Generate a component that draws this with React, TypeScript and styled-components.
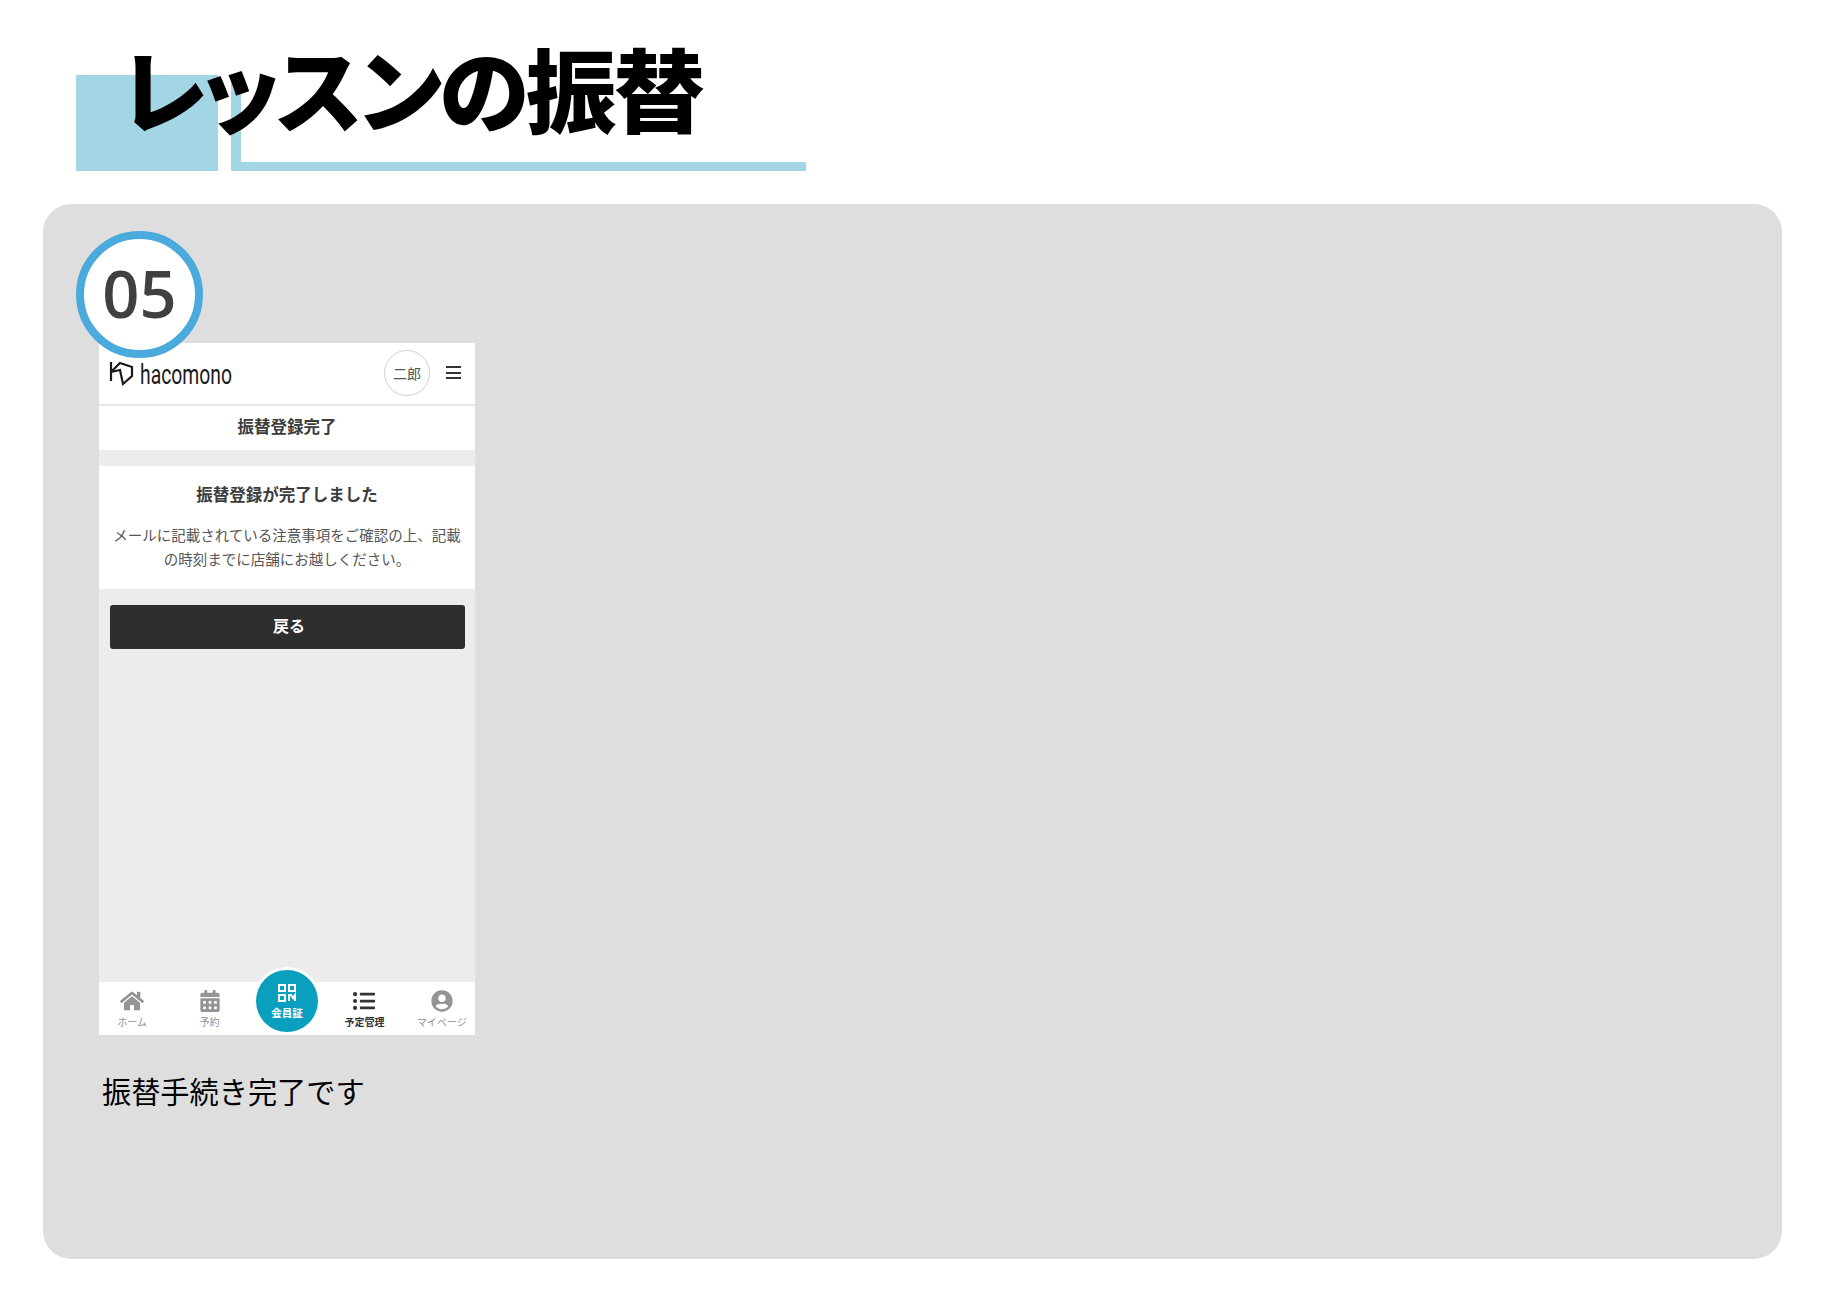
import * as React from 'react';
import { FaCalendarAlt, FaHome, FaListUl, FaUserCircle } from 'react-icons/fa';
import styled, { createGlobalStyle } from 'styled-components';

const GlobalStyle = createGlobalStyle`
  html, body {
    margin: 0;
    padding: 0;
    background: #fff;
    font-family: "Noto Sans CJK JP", "Noto Sans", sans-serif;
  }
`;

const Page = styled.div`
  width: 1825px;
  height: 1298px;
  padding: 0 43px;
  box-sizing: border-box;
  overflow: hidden;
`;

const Head = styled.header`
  position: relative;
  height: 204px;
`;

const HeadSquare = styled.div`
  position: absolute;
  left: 33px;
  top: 75px;
  width: 142px;
  height: 96px;
  background: #a2d6e5;
`;

const HeadFrame = styled.div`
  position: absolute;
  left: 188px;
  top: 75px;
  width: 565px;
  height: 87px;
  border-left: 10px solid #a2d6e5;
  border-bottom: 9px solid #a2d6e5;
`;

const Title = styled.h1`
  position: relative;
  margin: 0;
  padding: 31px 0 0 78px;
  font-size: 91px;
  line-height: 110px;
  font-weight: 900;
  letter-spacing: -3px;
  font-feature-settings: "palt" 1;
  color: #000;
`;

const Panel = styled.main`
  position: relative;
  height: 1055px;
  box-sizing: border-box;
  padding: 139px 0 0 56px;
  background: #dedede;
  border-radius: 28px;
`;

const StepBadge = styled.div`
  position: absolute;
  left: 33px;
  top: 27px;
  z-index: 2;
  width: 127px;
  height: 127px;
  box-sizing: border-box;
  border: 8px solid #4aaadb;
  border-radius: 50%;
  background: #fff;
  display: flex;
  align-items: center;
  justify-content: center;
  padding-bottom: 3px;
  font-family: "Open Sans", sans-serif;
  font-size: 65px;
  font-weight: 600;
  color: #404040;
`;

const Phone = styled.section`
  width: 376px;
  height: 692px;
  display: flex;
  flex-direction: column;
  background: #ececec;
`;

const PhoneHeader = styled.div`
  flex: 0 0 61px;
  display: flex;
  align-items: center;
  background: #fff;
  padding: 0 14px 0 10px;
  border-bottom: 2px solid #e8e8e8;
`;

const LogoWord = styled.span`
  margin: 2px 0 0 6px;
  font-family: "Roboto", sans-serif;
  font-size: 28px;
  line-height: 30px;
  color: #1a1a1a;
  display: inline-block;
  transform: scaleX(0.69);
  transform-origin: left center;
  width: 94px;
`;

const UserChip = styled.div`
  margin: -2px -1px 0 auto;
  width: 46px;
  height: 46px;
  box-sizing: border-box;
  border: 1px solid #cfcfcf;
  border-radius: 50%;
  display: flex;
  align-items: center;
  justify-content: center;
  font-size: 14px;
  color: #555;
`;

const MenuLines = styled.div`
  margin: -2px 0 0 17px;
  width: 15px;
  height: 13px;
  border-top: 2px solid #333;
  border-bottom: 2px solid #333;
  box-sizing: border-box;
  display: flex;
  align-items: center;

  &::before {
    content: '';
    display: block;
    width: 100%;
    height: 2px;
    background: #333;
  }
`;

const PageName = styled.div`
  flex: 0 0 44px;
  box-sizing: border-box;
  padding-bottom: 4px;
  display: flex;
  align-items: center;
  justify-content: center;
  background: #fff;
  font-size: 16.5px;
  font-weight: 700;
  color: #3c3c3c;
`;

const DoneCard = styled.div`
  margin-top: 16px;
  flex: 0 0 123px;
  box-sizing: border-box;
  padding: 16px 10px 0;
  background: #fff;
  text-align: center;
  color: #444;
`;

const DoneTitle = styled.div`
  font-size: 16.5px;
  line-height: 24px;
  font-weight: 700;
  color: #3c3c3c;
`;

const DoneText = styled.p`
  margin: 17px 0 0;
  font-size: 14.5px;
  line-height: 24px;
  color: #555;
`;

const BackButton = styled.button`
  margin: 16px 10px 0 11px;
  flex: 0 0 44px;
  border: 0;
  border-radius: 3px;
  padding: 0 0 4px 3px;
  background: #2e2e2e;
  color: #fff;
  font-family: inherit;
  font-size: 16px;
  font-weight: 700;
`;

const Spacer = styled.div`
  flex: 1;
`;

const TabBar = styled.nav`
  position: relative;
  flex: 0 0 53px;
  display: grid;
  grid-template-columns: repeat(5, 77.4px);
  justify-content: center;
  background: #fff;
`;

const Tab = styled.div<{ $active?: boolean }>`
  display: flex;
  flex-direction: column;
  align-items: center;
  padding-top: 8px;
  color: ${({ $active }) => ($active ? '#333' : '#949494')};
  font-size: 10px;
  line-height: 12px;
  font-weight: ${({ $active }) => ($active ? 700 : 400)};

  svg {
    height: 22px;
    width: 24px;
    margin-bottom: 4px;
  }
`;

const MemberCard = styled.div`
  position: absolute;
  left: 50%;
  top: -12px;
  transform: translateX(-50%);
  width: 62px;
  height: 62px;
  border-radius: 50%;
  background: #0b9fbf;
  box-shadow: 0 0 0 3px #fff;
  display: flex;
  flex-direction: column;
  align-items: center;
  justify-content: center;
  color: #fff;
  font-size: 10.5px;
  line-height: 12px;
  font-weight: 700;

  svg {
    margin-bottom: 4px;
  }
`;

const Caption = styled.p`
  margin: 35px 0 0 3px;
  font-size: 29.2px;
  line-height: 40px;
  font-weight: 400;
  color: #000;
`;

const HacoLogo = () => (
  <svg width="25" height="26" viewBox="0 0 25 26" fill="none" stroke="#1a1a1a" strokeWidth="2.2">
    <path d="M2 1v19" />
    <path d="M2 11 11 2l12 4v9l-9 8-3-14-9 2" />
  </svg>
);

const QrIcon = () => (
  <svg width="20" height="20" viewBox="0 0 20 20" fill="none" stroke="#fff" strokeWidth="2">
    <rect x="2" y="2" width="6" height="6" />
    <rect x="12" y="2" width="6" height="6" />
    <rect x="2" y="12" width="6" height="6" />
    <path d="M12 18v-6h2l2 3 2-3v6" />
  </svg>
);

export default function App() {
  return (
    <Page>
      <GlobalStyle />
      <Head>
        <HeadSquare />
        <HeadFrame />
        <Title>レッスンの振替</Title>
      </Head>
      <Panel>
        <StepBadge>05</StepBadge>
        <Phone>
          <PhoneHeader>
            <HacoLogo />
            <LogoWord>hacomono</LogoWord>
            <UserChip>二郎</UserChip>
            <MenuLines />
          </PhoneHeader>
          <PageName>振替登録完了</PageName>
          <DoneCard>
            <DoneTitle>振替登録が完了しました</DoneTitle>
            <DoneText>
              メールに記載されている注意事項をご確認の上、記載
              <br />
              の時刻までに店舗にお越しください。
            </DoneText>
          </DoneCard>
          <BackButton>戻る</BackButton>
          <Spacer />
          <TabBar>
            <Tab>
              <FaHome />
              ホーム
            </Tab>
            <Tab>
              <FaCalendarAlt />
              予約
            </Tab>
            <Tab />
            <Tab $active>
              <FaListUl />
              予定管理
            </Tab>
            <Tab>
              <FaUserCircle />
              マイページ
            </Tab>
            <MemberCard>
              <QrIcon />
              会員証
            </MemberCard>
          </TabBar>
        </Phone>
        <Caption>振替手続き完了です</Caption>
      </Panel>
    </Page>
  );
}
